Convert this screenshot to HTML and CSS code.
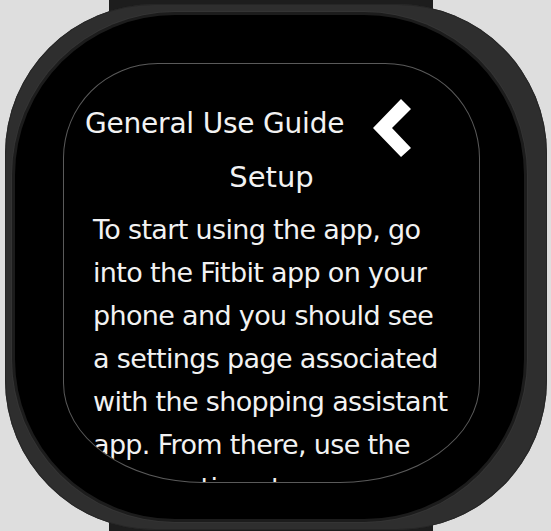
FILE: index.html
```html
<!DOCTYPE html>
<html lang="en">
<head>
<meta charset="utf-8">
<title>General Use Guide</title>
<link rel="stylesheet" href="styles.css">
</head>
<body>
<div class="stage">
  <div class="strap"></div>
  <div class="watch">
    <div class="screen">
      <div class="glass">
        <header class="top">
          <h1 class="title">General Use Guide</h1>
          <svg class="back" width="42" height="62" viewBox="0 0 42 62" aria-label="Back">
            <polygon points="2,31 30,2 40,12 21,31 40,51 30,60" fill="#ffffff"/>
          </svg>
        </header>
        <h2 class="sub">Setup</h2>
        <p class="body">To start using the app, go<br>into the Fitbit app on your<br>phone and you should see<br>a settings page associated<br>with the shopping assistant<br>app. From there, use the<br>more options to save your</p>
      </div>
    </div>
  </div>
</div>
</body>
</html>
```
FILE: styles.css
```css
* { box-sizing: border-box; margin: 0; padding: 0; }
html, body { width: 551px; height: 531px; overflow: hidden; }
body { background: #dedede; font-family: "DejaVu Sans", sans-serif; }

.stage {
  display: grid;
  grid-template-columns: 551px;
  grid-template-rows: 531px;
  width: 551px;
  height: 531px;
}
.strap, .watch { grid-area: 1 / 1; }
.strap { width: 324px; margin-left: 109px; background: #1d1d1d; }

.watch {
  margin: 4px 4px 1px 5px;
  background: #2e2e2e;
  border-radius: 150px;
  padding: 11px 23px 11px 10px;
  display: flex;
  box-shadow: inset 0 0 0 1px #262626;
}
.screen {
  flex: 1;
  background: #000;
  border-radius: 160px;
  padding: 48px 44px 36px 48px;
  display: flex;
  box-shadow: 0 0 0 3px #1c1c1c, 0 0 0 4px #343434;
}
.glass {
  flex: 1;
  border: 1px solid #5a5a5a;
  border-radius: 95px 95px 140px 140px / 95px 95px 100px 100px;
  overflow: hidden;
  color: #f2f2f2;
}

.top { display: flex; align-items: flex-start; padding: 33px 0 0 21px; }
.title { font-size: 28px; font-weight: 400; line-height: 34px; letter-spacing: -0.2px; margin-top: 10px; }
.back { margin-left: auto; margin-right: 66px; display: block; }

.sub { font-size: 29px; font-weight: 400; line-height: 34px; text-align: center; margin-top: 1px; }

.body {
  font-size: 27px;
  line-height: 43px;
  letter-spacing: -0.66px;
  margin-top: 14px;
  padding-left: 29px;
  white-space: nowrap;
}
```
